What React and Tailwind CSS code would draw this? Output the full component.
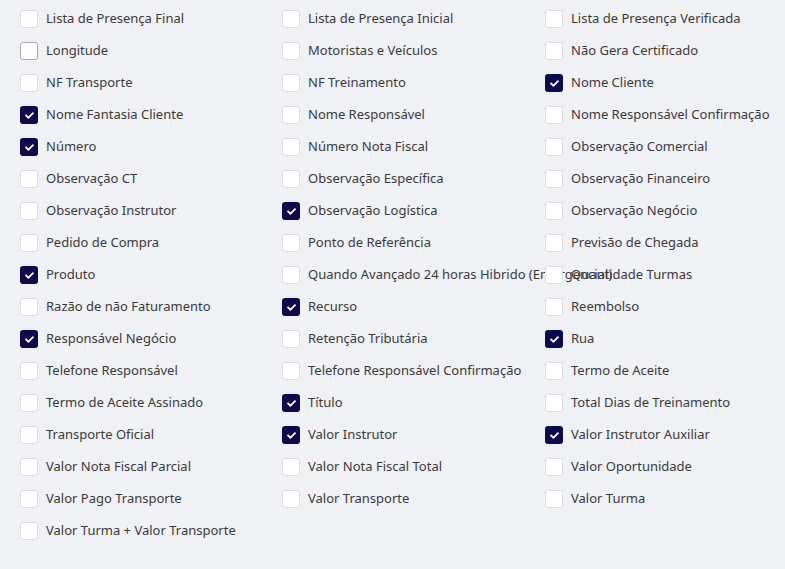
import React from "react";
import { FaCheck } from "react-icons/fa";

const fields = [
  ["Lista de Presença Final", false], ["Lista de Presença Inicial", false], ["Lista de Presença Verificada", false],
  ["Longitude", false], ["Motoristas e Veículos", false], ["Não Gera Certificado", false],
  ["NF Transporte", false], ["NF Treinamento", false], ["Nome Cliente", true],
  ["Nome Fantasia Cliente", true], ["Nome Responsável", false], ["Nome Responsável Confirmação", false],
  ["Número", true], ["Número Nota Fiscal", false], ["Observação Comercial", false],
  ["Observação CT", false], ["Observação Específica", false], ["Observação Financeiro", false],
  ["Observação Instrutor", false], ["Observação Logística", true], ["Observação Negócio", false],
  ["Pedido de Compra", false], ["Ponto de Referência", false], ["Previsão de Chegada", false],
  ["Produto", true], ["Quando Avançado 24 horas Hibrido (Emergencial)", false], ["Quantidade Turmas", false],
  ["Razão de não Faturamento", false], ["Recurso", true], ["Reembolso", false],
  ["Responsável Negócio", true], ["Retenção Tributária", false], ["Rua", true],
  ["Telefone Responsável", false], ["Telefone Responsável Confirmação", false], ["Termo de Aceite", false],
  ["Termo de Aceite Assinado", false], ["Título", true], ["Total Dias de Treinamento", false],
  ["Transporte Oficial", false], ["Valor Instrutor", true], ["Valor Instrutor Auxiliar", true],
  ["Valor Nota Fiscal Parcial", false], ["Valor Nota Fiscal Total", false], ["Valor Oportunidade", false],
  ["Valor Pago Transporte", false], ["Valor Transporte", false], ["Valor Turma", false],
  ["Valor Turma + Valor Transporte", false],
];

export default function App() {
  return (
    <div className="min-h-screen bg-[#f0f1f5] pl-5 pt-[3px] overflow-hidden" style={{ fontFamily: "'Noto Sans', sans-serif" }}>
      <div className="grid grid-cols-[262px_263px_263px]">
        {fields.map(([label, checked]) => (
          <div key={label} className="h-8 flex items-center gap-2 whitespace-nowrap">
            {checked ? (
              <span className="w-[18px] h-[18px] shrink-0 rounded-[3px] bg-[#0e0b4d] flex items-center justify-center">
                <FaCheck className="text-white text-[9px]" />
              </span>
            ) : (
              <span className={`w-[18px] h-[18px] shrink-0 rounded-[3px] bg-white border ${label === "Longitude" ? "border-[#a9a9b0]" : "border-[#dcdde3]"}`} />
            )}
            <span className="text-[13px] text-[#3a3a3a]">{label}</span>
          </div>
        ))}
      </div>
    </div>
  );
}
